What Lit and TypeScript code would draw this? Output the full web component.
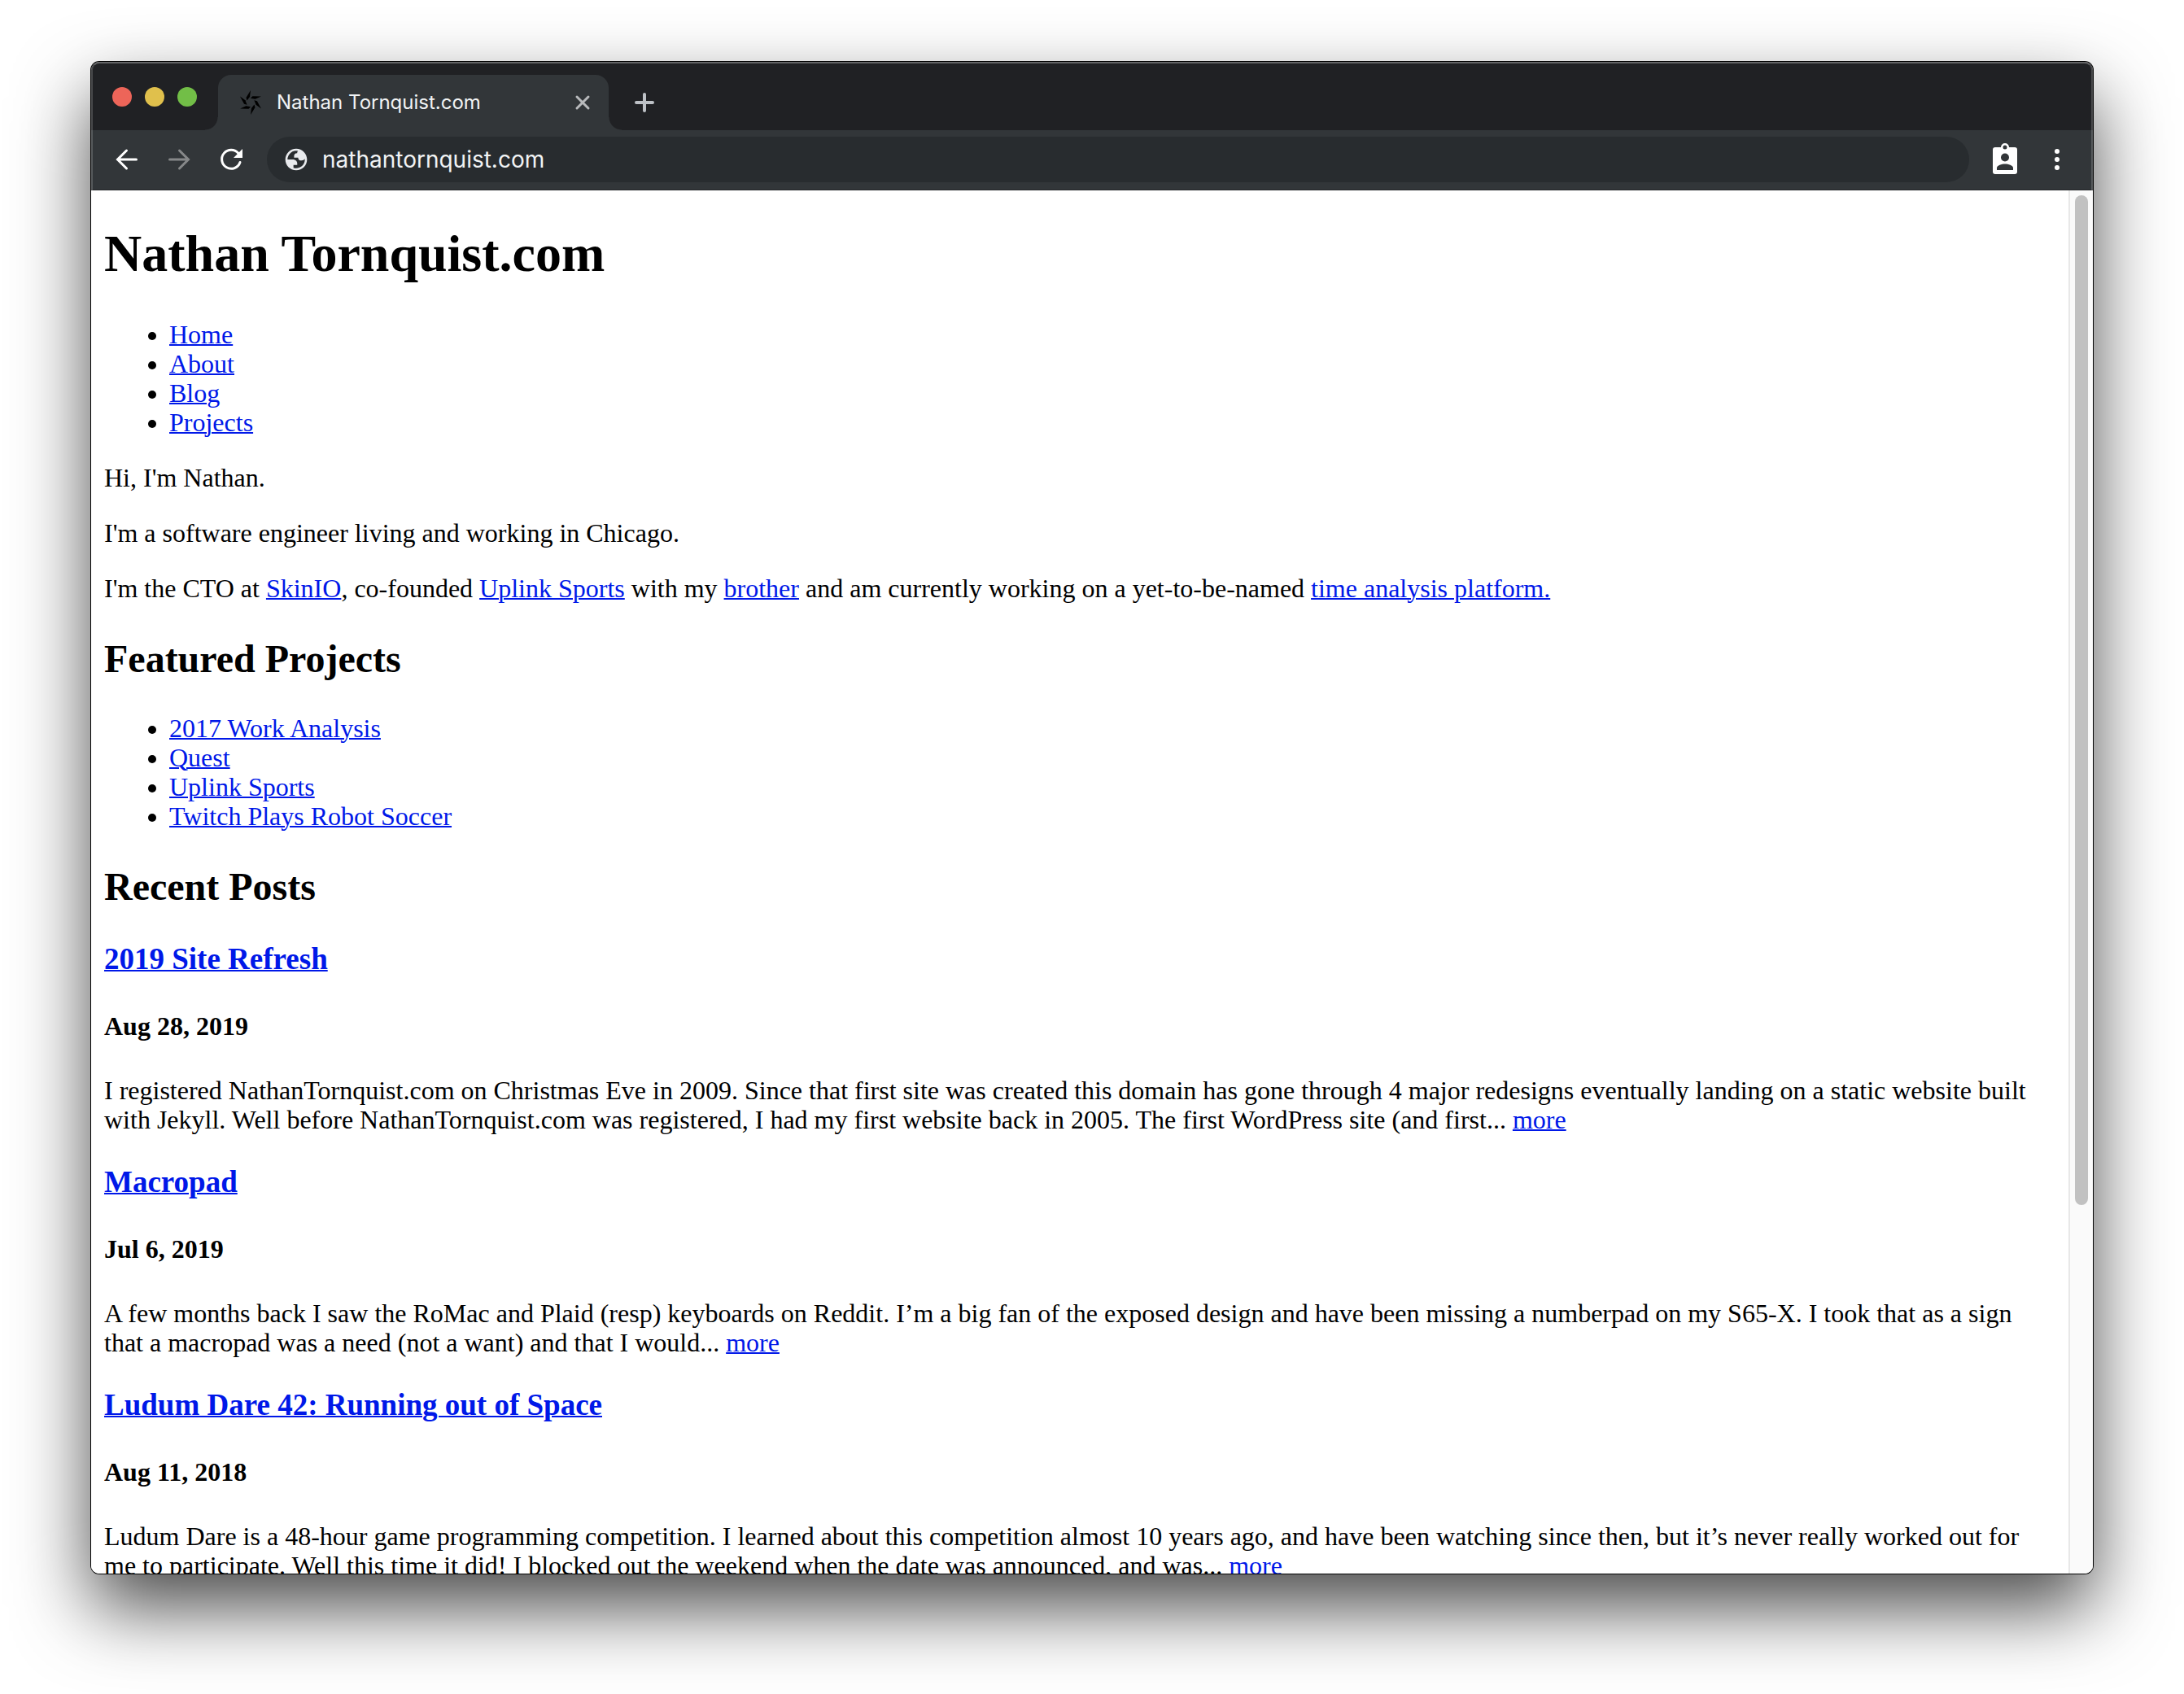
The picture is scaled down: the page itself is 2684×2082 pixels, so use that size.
import { LitElement, html, css, svg } from "lit";
import { customElement, property } from "lit/decorators.js";

interface LinkItem {
  label: string;
  href: string;
}

interface Post extends LinkItem {
  date: string;
  excerpt: string;
}

const NAV: LinkItem[] = [
  { label: "Home", href: "#home" },
  { label: "About", href: "#about" },
  { label: "Blog", href: "#blog" },
  { label: "Projects", href: "#projects" },
];

const PROJECTS: LinkItem[] = [
  { label: "2017 Work Analysis", href: "#2017-work-analysis" },
  { label: "Quest", href: "#quest" },
  { label: "Uplink Sports", href: "#uplink-sports" },
  { label: "Twitch Plays Robot Soccer", href: "#robot-soccer" },
];

const POSTS: Post[] = [
  {
    label: "2019 Site Refresh",
    href: "#site-refresh",
    date: "Aug 28, 2019",
    excerpt:
      "I registered NathanTornquist.com on Christmas Eve in 2009. Since that first site was created this domain has gone through 4 major redesigns eventually landing on a static website built with Jekyll. Well before NathanTornquist.com was registered, I had my first website back in 2005. The first WordPress site (and first...",
  },
  {
    label: "Macropad",
    href: "#macropad",
    date: "Jul 6, 2019",
    excerpt:
      "A few months back I saw the RoMac and Plaid (resp) keyboards on Reddit. I’m a big fan of the exposed design and have been missing a numberpad on my S65-X. I took that as a sign that a macropad was a need (not a want) and that I would...",
  },
  {
    label: "Ludum Dare 42: Running out of Space",
    href: "#ludum-dare-42",
    date: "Aug 11, 2018",
    excerpt:
      "Ludum Dare is a 48-hour game programming competition. I learned about this competition almost 10 years ago, and have been watching since then, but it’s never really worked out for me to participate. Well this time it did! I blocked out the weekend when the date was announced, and was...",
  },
];

/** One of the six blades of the pinwheel favicon, turned about its centre. */
const blade = (turn: number) =>
  svg`<path d="M16 1L10.500 10L11.500 13.500L15 9Z" transform="rotate(${turn} 16 16)" />`;

@customElement("tab-strip")
export class TabStrip extends LitElement {
  @property() heading = "";

  static styles = css`
    :host {
      display: flex;
      align-items: flex-end;
      height: 84px;
      background: #202124;
      font-family: Inter, Roboto, sans-serif;
    }
    .lights {
      display: flex;
      align-self: center;
      gap: 16px;
      padding: 2px 26px 0 26px;
    }
    .light {
      width: 24px;
      height: 24px;
      padding: 0;
      border: 0;
      border-radius: 50%;
    }
    .close {
      background: #ed6559;
    }
    .minimise {
      background: #e0c04c;
    }
    .zoom {
      background: #72be47;
    }
    .foot {
      width: 16px;
      height: 16px;
      flex: none;
    }
    .foot-left {
      margin-left: -16px;
      background: radial-gradient(circle at 0 0, #202124 15px, #323639 16px);
    }
    .foot-right {
      background: radial-gradient(circle at 100% 0, #202124 15px, #323639 16px);
    }
    .tab {
      display: flex;
      align-items: center;
      box-sizing: border-box;
      width: 480px;
      height: 68px;
      padding: 0 20px 0 24px;
      border-radius: 16px 16px 0 0;
      background: #323639;
      color: #f1f3f4;
    }
    .favicon {
      width: 32px;
      height: 32px;
      flex: none;
    }
    .title {
      flex: 1;
      padding-left: 16px;
      font-size: 24px;
      line-height: 32px;
      white-space: nowrap;
    }
    .icon-button {
      display: flex;
      padding: 0;
      border: 0;
      background: none;
    }
    .new-tab {
      align-self: center;
      padding: 16px 0 0 16px;
    }
  `;

  render() {
    return html`
      <div class="lights">
        <button class="light close" aria-label="Close window"></button>
        <button class="light minimise" aria-label="Minimise window"></button>
        <button class="light zoom" aria-label="Zoom window"></button>
      </div>
      <span class="foot foot-left"></span>
      <div class="tab">
        <svg class="favicon" viewBox="0 0 32 32" aria-hidden="true">
          ${[0, 60, 120, 180, 240, 300].map(blade)}
        </svg>
        <span class="title">${this.heading}</span>
        <button class="icon-button" aria-label="Close tab">
          <svg width="24" height="24" viewBox="0 0 24 24" fill="none" stroke="#b8babc" stroke-width="3" stroke-linecap="round">
            <path d="M5 5L19 19M19 5L5 19" />
          </svg>
        </button>
      </div>
      <span class="foot foot-right"></span>
      <button class="icon-button new-tab" aria-label="New tab">
        <svg width="24" height="24" viewBox="0 0 24 24" fill="none" stroke="#bdc1c6" stroke-width="4" stroke-linecap="round">
          <path d="M12 2V22M2 12H22" />
        </svg>
      </button>
    `;
  }
}

@customElement("address-bar")
export class AddressBar extends LitElement {
  @property() address = "";

  static styles = css`
    :host {
      display: flex;
      align-items: center;
      box-sizing: border-box;
      height: 74px;
      padding: 8px 28px 9px;
      border-bottom: 1px solid #25282a;
      background: #323639;
    }
    .icon-button {
      display: flex;
      flex: none;
      padding: 0;
      border: 0;
      background: none;
    }
    .history {
      display: flex;
      gap: 32px;
      margin-right: 28px;
    }
    .omnibox {
      display: flex;
      flex: 1;
      align-items: center;
      height: 56px;
      padding-left: 20px;
      border-radius: 28px;
      background: #282c2f;
    }
    .field {
      flex: 1;
      min-width: 0;
      padding: 0 0 0 16px;
      border: 0;
      outline: 0;
      background: none;
      color: #f1f3f4;
      font: 28px/40px Inter, Roboto, sans-serif;
    }
    .extras {
      display: flex;
      gap: 32px;
      margin-left: 28px;
    }
  `;

  render() {
    return html`
      <div class="history">
        <button class="icon-button" aria-label="Back">
          <svg width="32" height="32" viewBox="0 0 32 32" fill="none" stroke="#fff" stroke-width="3" stroke-linecap="round">
            <path d="M27.500 16H5M15.500 5L4.500 16L15.500 27" />
          </svg>
        </button>
        <button class="icon-button" aria-label="Forward">
          <svg width="32" height="32" viewBox="0 0 32 32" fill="none" stroke="#868889" stroke-width="3" stroke-linecap="round">
            <path d="M4.500 16H27M16.500 5L27.500 16L16.500 27" />
          </svg>
        </button>
        <button class="icon-button" aria-label="Reload">
          <svg width="32" height="32" viewBox="0 0 32 32" fill="none">
            <path d="M25 8.5A11.5 11.5 0 1 0 27 19.5" stroke="#fff" stroke-width="3" stroke-linecap="round" />
            <path d="M30 3V14H19Z" fill="#fff" />
          </svg>
        </button>
      </div>
      <div class="omnibox">
        <svg width="32" height="32" viewBox="0 0 24 24" fill="#e8eaed" fill-rule="evenodd" aria-hidden="true">
          <path
            d="M12 2C6.48 2 2 6.48 2 12s4.48 10 10 10 10-4.48 10-10S17.52 2 12 2zM4 12h4.4c3.407.022 4.922 1.73 4.543 5.127H9.488v2.47a8.004 8.004 0 0 0 10.498-8.083C19.327 12.504 18.332 13 17 13c-2.137 0-3.206-.916-3.206-2.75h-3.748c-.274-2.728.683-4.092 2.87-4.092 0-.975.327-1.597.811-1.97A8.004 8.004 0 0 0 4 12z"
          />
        </svg>
        <input class="field" type="text" aria-label="Address" .value=${this.address} />
      </div>
      <div class="extras">
        <button class="icon-button" aria-label="Profile">
          <svg width="32" height="40" viewBox="0 0 32 40">
            <path
              fill="#fff"
              fill-rule="evenodd"
              d="M4 5H11A5 5 0 0 1 21 5H28A3 3 0 0 1 31 8V35A3 3 0 0 1 28 38H4A3 3 0 0 1 1 35V8A3 3 0 0 1 4 5ZM16 2.500A2.500 2.500 0 1 0 16 7.500A2.500 2.500 0 1 0 16 2.500ZM16 12.500A5 5 0 1 0 16 22.500A5 5 0 1 0 16 12.500ZM6 33V30.500C6 27 12 25.500 16 25.500S26 27 26 30.500V33Z"
            />
          </svg>
        </button>
        <button class="icon-button" aria-label="Menu">
          <svg width="32" height="40" viewBox="0 0 32 40" fill="#fff">
            <circle cx="16" cy="10" r="3" />
            <circle cx="16" cy="20" r="3" />
            <circle cx="16" cy="30" r="3" />
          </svg>
        </button>
      </div>
    `;
  }
}

@customElement("site-page")
export class SitePage extends LitElement {
  static styles = css`
    :host {
      display: block;
      background: #fff;
      color: #000;
      font: 32px/36px "Liberation Serif", "Times New Roman", serif;
    }
    .page {
      padding: 0 16px;
    }
    .site-title {
      margin: 42px 0 45px;
      font-size: 64px;
      line-height: 72px;
    }
    .list {
      margin: 32px 0;
      padding-left: 80px;
    }
    .section {
      margin: 41px 0 39px;
      font-size: 48px;
      line-height: 56px;
    }
    .post-title {
      margin: 37px 0 42px;
      font-size: 37px;
      line-height: 44px;
    }
    .date {
      margin: 42px 0 43px;
      font-size: 32px;
      line-height: 36px;
    }
    .text {
      margin: 32px 0;
    }
    .site-title,
    .section,
    .post-title,
    .date {
      font-weight: bold;
    }
    .link {
      color: #0018e8;
      text-decoration: underline;
      text-decoration-thickness: 2px;
    }
  `;

  private list(items: LinkItem[]) {
    return html`<ul class="list">
      ${items.map((item) => html`<li><a class="link" href=${item.href}>${item.label}</a></li>`)}
    </ul>`;
  }

  render() {
    return html`
      <div class="page">
        <h1 class="site-title">Nathan Tornquist.com</h1>
        <nav>${this.list(NAV)}</nav>
        <p class="text">Hi, I'm Nathan.</p>
        <p class="text">I'm a software engineer living and working in Chicago.</p>
        <p class="text">
          I'm the CTO at <a class="link" href="#skinio">SkinIO</a>, co-founded
          <a class="link" href="#uplink">Uplink Sports</a> with my
          <a class="link" href="#brother">brother</a> and am currently working on a yet-to-be-named
          <a class="link" href="#time">time analysis platform.</a>
        </p>
        <h2 class="section">Featured Projects</h2>
        ${this.list(PROJECTS)}
        <h2 class="section">Recent Posts</h2>
        ${POSTS.map(
          (post) => html`<article>
            <h3 class="post-title"><a class="link" href=${post.href}>${post.label}</a></h3>
            <h4 class="date">${post.date}</h4>
            <p class="text">${post.excerpt} <a class="link" href=${post.href}>more</a></p>
          </article>`
        )}
      </div>
    `;
  }
}

@customElement("app-root")
export class AppRoot extends LitElement {
  static styles = css`
    :host {
      display: block;
      background: #fff;
    }
    .desktop {
      display: flex;
      box-sizing: border-box;
      height: 100vh;
      padding: 76px 112px 148px;
      overflow: hidden;
    }
    .window {
      display: flex;
      flex: 1;
      flex-direction: column;
      min-width: 0;
      border-radius: 10px;
      box-shadow: 0 0 0 1px #000, 0 42px 92px rgba(0, 0, 0, 0.71);
      overflow: hidden;
    }
    .chrome {
      position: relative;
      flex: none;
    }
    .chrome::after {
      content: "";
      position: absolute;
      inset: 0;
      border: 2px solid rgba(255, 255, 255, 0.18);
      border-top-color: rgba(255, 255, 255, 0.3);
      border-bottom: 0;
      border-radius: 10px 10px 0 0;
      pointer-events: none;
    }
    .viewport {
      display: flex;
      flex: 1;
      min-height: 0;
      background: #fff;
    }
    .content {
      flex: 1;
      min-width: 0;
      overflow: hidden;
    }
    .scrollbar {
      box-sizing: border-box;
      width: 30px;
      padding: 6px;
      border-left: 2px solid #e8e8e8;
      background: #fafafa;
    }
    .thumb {
      width: 16px;
      height: 73.5%;
      border-radius: 8px;
      background: #c1c1c1;
    }
  `;

  render() {
    return html`
      <div class="desktop">
        <div class="window">
          <header class="chrome">
            <tab-strip heading="Nathan Tornquist.com"></tab-strip>
            <address-bar address="nathantornquist.com"></address-bar>
          </header>
          <div class="viewport">
            <main class="content"><site-page></site-page></main>
            <div class="scrollbar"><div class="thumb"></div></div>
          </div>
        </div>
      </div>
    `;
  }
}
